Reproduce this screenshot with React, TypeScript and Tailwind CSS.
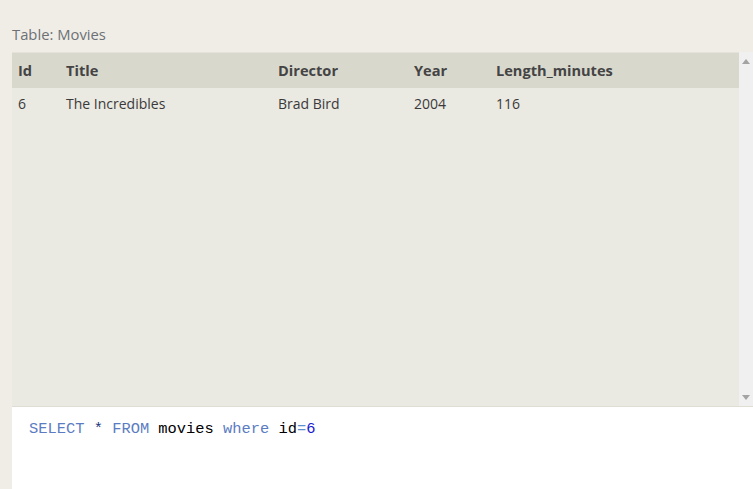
import React from 'react';

const columns = ['Id', 'Title', 'Director', 'Year', 'Length_minutes'];
const rows = [['6', 'The Incredibles', 'Brad Bird', '2004', '116']];

export default function App() {
  return (
    <div className="w-full h-[489px] overflow-hidden bg-[#f0ede6] pt-[24px] flex flex-col font-['Open_Sans',sans-serif]">
      {/* Label */}
      <div className="pl-3 text-[14.8px] leading-[20px] text-[#6c7177] mb-[8px]">Table: Movies</div>

      <div className="ml-3 flex-1 flex flex-col">
        {/* Results table + scrollbar */}
        <div className="h-[355px] flex border-b border-[#dfddd4]">
          <div className="flex-1 bg-[#eae9e2] border-t border-[#e4e2d9]">
            <div className="grid grid-cols-[48px_212px_136px_82px_1fr] h-[35px] items-center bg-[#d9d8cd] text-[14.6px] font-bold text-[#444444]">
              {columns.map((c) => (
                <div key={c} className="px-[6px]">{c}</div>
              ))}
            </div>
            {rows.map((r, i) => (
              <div key={i} className="grid grid-cols-[48px_212px_136px_82px_1fr] h-[30px] items-center text-[14px] text-[#3a3a3a]">
                {r.map((v, j) => (
                  <div key={j} className="px-[6px]">{v}</div>
                ))}
              </div>
            ))}
          </div>
          {/* Scrollbar */}
          <div className="w-[14px] bg-[#f0f0f0] flex flex-col justify-between items-center pt-[7px] pb-[6px]">
            <svg width="8" height="5" viewBox="0 0 8 5">
              <path d="M4 0L8 5H0Z" fill="#a3a3a3" />
            </svg>
            <svg width="8" height="5" viewBox="0 0 8 5">
              <path d="M0 0H8L4 5Z" fill="#a3a3a3" />
            </svg>
          </div>
        </div>

        {/* SQL editor */}
        <div className="flex-1 bg-white pt-[12px] pl-[17px] font-['Liberation_Mono',monospace] text-[15.4px] leading-[20px] whitespace-pre">
          <span className="text-[#5b7cc2]">SELECT</span>
          <span> </span>
          <span className="text-[#22337a]">*</span>
          <span> </span>
          <span className="text-[#5b7cc2]">FROM</span>
          <span className="text-black"> movies </span>
          <span className="text-[#5b7cc2]">where</span>
          <span className="text-black"> id</span>
          <span className="text-[#5b8fd0]">=</span>
          <span className="text-[#1a1ad0]">6</span>
        </div>
      </div>
    </div>
  );
}
